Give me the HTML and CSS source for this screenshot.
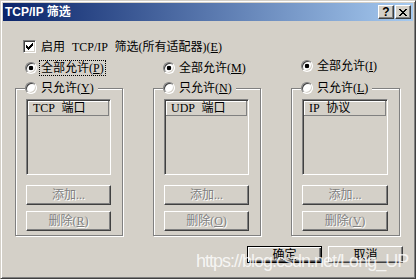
FILE: index.html
```html
<!DOCTYPE html>
<html>
<head>
<meta charset="utf-8">
<link rel="stylesheet" href="styles.css">
</head>
<body>
<div class="window">
  <div class="titlebar">
    <span class="title">TCP/IP 筛选</span>
    <div class="tb-buttons">
      <span class="tb-btn help">?</span>
      <span class="tb-btn close"><svg width="8" height="7" viewBox="0 0 8 7" shape-rendering="crispEdges"><path fill="#000" d="M0 0h2v1h-2zM6 0h2v1h-2zM1 1h2v1h-2zM5 1h2v1h-2zM2 2h2v1h-2zM4 2h2v1h-2zM3 3h2v1h-2zM2 4h2v1h-2zM4 4h2v1h-2zM1 5h2v1h-2zM5 5h2v1h-2zM0 6h2v1h-2zM6 6h2v1h-2z"/></svg></span>
    </div>
  </div>
  <div class="content">
    <div class="enable-row">
      <span class="checkbox"><svg width="7" height="7" viewBox="0 0 7 7" shape-rendering="crispEdges"><path fill="#000" d="M0 2h1v3h-1zM1 3h1v3h-1zM2 4h1v3h-1zM3 3h1v3h-1zM4 2h1v3h-1zM5 1h1v3h-1zM6 0h1v3h-1z"/></svg></span>
      <span class="label">启用 TCP/IP 筛选(所有适配器)(<u>E</u>)</span>
    </div>
    <div class="columns">
      <div class="col">
        <div class="radio-row top"><span class="radio checked"></span><span class="label focus">全部允许(<u>P</u>)</span></div>
        <fieldset class="group">
          <legend class="radio-row"><span class="radio"></span><span class="label">只允许(<u>Y</u>)</span></legend>
          <div class="listbox"><div class="list-header">TCP 端口</div></div>
          <div class="btn disabled add">添加...</div>
          <div class="btn disabled del">删除(<u>R</u>)</div>
        </fieldset>
      </div>
      <div class="col">
        <div class="radio-row top"><span class="radio checked"></span><span class="label">全部允许(<u>M</u>)</span></div>
        <fieldset class="group">
          <legend class="radio-row"><span class="radio"></span><span class="label">只允许(<u>N</u>)</span></legend>
          <div class="listbox"><div class="list-header">UDP 端口</div></div>
          <div class="btn disabled add">添加...</div>
          <div class="btn disabled del">删除(<u>O</u>)</div>
        </fieldset>
      </div>
      <div class="col col-wide">
        <div class="radio-row top raised"><span class="radio checked"></span><span class="label">全部允许(<u>I</u>)</span></div>
        <fieldset class="group">
          <legend class="radio-row"><span class="radio"></span><span class="label">只允许(<u>L</u>)</span></legend>
          <div class="listbox"><div class="list-header">IP 协议</div></div>
          <div class="btn disabled add">添加...</div>
          <div class="btn disabled del">删除(<u>V</u>)</div>
        </fieldset>
      </div>
    </div>
    <div class="footer">
      <div class="btn default">确定</div>
      <div class="btn">取消</div>
    </div>
  </div>
  <div class="watermark">https://blog.csdn.net/Long_UP</div>
</div>
</body>
</html>
```

FILE: styles.css
```css
html, body {
  margin: 0;
  padding: 0;
  background: #d4d0c8;
}
body {
  font-family: "Liberation Serif", "Noto Sans CJK SC", serif;
  font-size: 12px;
  line-height: 14px;
  color: #000;
}
.window {
  position: relative;
  width: 416px;
  height: 279px;
  box-sizing: border-box;
  background: #d4d0c8;
  border: 1px solid;
  border-color: #d4d0c8 #404040 #404040 #d4d0c8;
  box-shadow: inset 1px 1px 0 #fff, inset -1px -1px 0 #808080;
  padding: 2px;
  overflow: hidden;
}
.titlebar {
  height: 18px;
  display: flex;
  align-items: center;
  justify-content: space-between;
  background: linear-gradient(to right, #0a246a, #a6caf0);
  padding: 0 2px 0 2px;
}
.title {
  font-family: "Liberation Sans", "Noto Sans CJK SC", sans-serif;
  font-weight: bold;
  font-size: 12px;
  color: #fff;
  margin-left: 0;
  white-space: nowrap;
}
.tb-buttons {
  display: flex;
  gap: 1px;
}
.tb-btn {
  width: 16px;
  height: 14px;
  box-sizing: border-box;
  display: flex;
  align-items: center;
  justify-content: center;
  background: #d4d0c8;
  border: 1px solid;
  border-color: #fff #404040 #404040 #fff;
  box-shadow: inset -1px -1px 0 #808080;
}
.help {
  font-family: "Liberation Sans", sans-serif;
  font-weight: bold;
  font-size: 12px;
  line-height: 12px;
}
.content {
  display: block;
}
.enable-row {
  margin-top: 19px;
  padding-left: 20px;
  height: 13px;
  display: flex;
  align-items: center;
  gap: 5px;
}
.label {
  white-space: nowrap;
  word-spacing: 4px;
}
.checkbox {
  width: 13px;
  height: 13px;
  box-sizing: border-box;
  border: 1px solid;
  border-color: #808080 #fff #fff #808080;
  box-shadow: inset 1px 1px 0 #404040, inset -1px -1px 0 #d4d0c8;
  background: #fff;
  display: flex;
  align-items: center;
  justify-content: center;
}
.columns {
  display: flex;
  gap: 30px;
  padding-left: 12px;
  margin-top: 8px;
}
.col {
  width: 108px;
  display: flex;
  flex-direction: column;
}
.col-wide {
  width: 109px;
}
.radio-row {
  display: flex;
  align-items: center;
  gap: 4px;
  height: 14px;
}
.radio-row.top {
  padding-left: 10px;
}
.radio-row.raised {
  margin-top: -2px;
  margin-bottom: 2px;
}
.radio {
  flex: none;
  width: 12px;
  height: 12px;
  box-sizing: border-box;
  border-radius: 50%;
  border: 1px solid;
  border-color: #808080 #fff #fff #808080;
  box-shadow: inset 1px 1px 0 #404040, inset -1px -1px 0 #d4d0c8;
  background: #fff;
}
.radio.checked {
  background: radial-gradient(circle at 50% 50%, #000 0, #000 2px, #fff 2.6px);
}
.focus {
  outline: 1px dotted #000;
  outline-offset: 0;
  padding: 0 1px;
  margin-left: -1px;
}
.group {
  margin: 6px 0 0 0;
  padding: 4px 11px 4px 10px;
  border: 1px solid #808080;
  box-shadow: 1px 1px 0 #fff, inset 1px 1px 0 #fff;
  min-width: 0;
}
.group legend {
  padding: 0 4px 0 0;
  margin-left: -1px;
  background: #d4d0c8;
}
.listbox {
  height: 76px;
  box-sizing: border-box;
  border: 1px solid;
  border-color: #808080 #fff #fff #808080;
  box-shadow: inset 1px 1px 0 #404040, inset -1px -1px 0 #d4d0c8;
  background: #d4d0c8;
  padding: 1px;
}
.list-header {
  height: 15px;
  box-sizing: border-box;
  padding-left: 5px;
  border-right: 1px solid #808080;
  border-bottom: 1px solid #808080;
  box-shadow: inset 1px 1px 0 #fff;
  line-height: 14px;
  white-space: nowrap;
  word-spacing: 4px;
}
.btn {
  box-sizing: border-box;
  display: flex;
  align-items: center;
  justify-content: center;
  background: #d4d0c8;
  border: 1px solid;
  border-color: #fff #404040 #404040 #fff;
  box-shadow: inset -1px -1px 0 #808080;
  white-space: nowrap;
  word-spacing: 4px;
}
.btn.add {
  height: 20px;
  margin-top: 10px;
}
.btn.del {
  height: 20px;
  margin-top: 6px;
}
.btn.disabled {
  color: #808080;
  text-shadow: 1px 1px 0 #fff;
}
.footer {
  display: flex;
  justify-content: flex-end;
  gap: 6px;
  margin-top: 10px;
  padding-right: 10px;
}
.footer .btn {
  width: 75px;
  height: 17px;
}
.footer .btn.default {
  border: 1px solid #000;
  box-shadow: inset 1px 1px 0 #fff, inset -1px -1px 0 #404040, inset -2px -2px 0 #808080;
}
.watermark {
  position: absolute;
  left: 195px;
  top: 251px;
  font-family: "Liberation Sans", sans-serif;
  font-size: 18px;
  line-height: 18px;
  letter-spacing: -1px;
  color: rgba(255, 255, 255, 0.8);
  white-space: nowrap;
  pointer-events: none;
}
```
